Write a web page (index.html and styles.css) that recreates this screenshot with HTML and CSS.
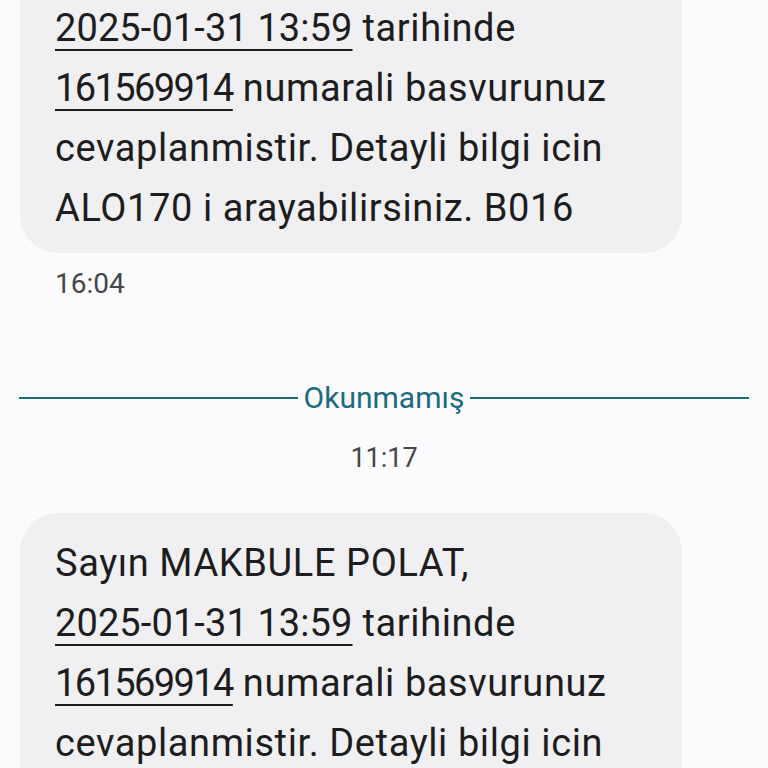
FILE: index.html
```html
<!DOCTYPE html>
<html lang="tr">

<head>
    <meta charset="UTF-8">
    <meta name="viewport" content="width=device-width, initial-scale=1.0">
    <title>Mesajlar</title>
    <link rel="stylesheet" href="styles.css">
</head>

<body>

    <main class="thread">
        <div class="message first">
            <div class="bubble">
                <p>Sayın MAKBULE POLAT,<br>
                <span class="link">2025-01-31 13:59</span> tarihinde<br>
                <span class="link number">161569914</span> numarali basvurunuz<br>
                cevaplanmistir. Detayli bilgi icin<br>
                ALO170 i arayabilirsiniz. B016</p>
            </div>
            <div class="time">16:04</div>
        </div>

        <div class="unread">
            <span class="rule"></span>
            <span class="unread-label">Okunmamış</span>
            <span class="rule"></span>
        </div>

        <div class="day-time">11:17</div>

        <div class="message">
            <div class="bubble">
                <p>Sayın MAKBULE POLAT,<br>
                <span class="link">2025-01-31 13:59</span> tarihinde<br>
                <span class="link number">161569914</span> numarali basvurunuz<br>
                cevaplanmistir. Detayli bilgi icin<br>
                ALO170 i arayabilirsiniz. B016</p>
            </div>
        </div>
    </main>

</body>

</html>
```

FILE: styles.css
```css
body {
    margin: 0;
    background-color: #fbfbfe;
    font-family: Roboto, "Noto Sans", sans-serif;
    color: #1d1d20;
    overflow: hidden;
}

.thread {
    display: flex;
    flex-direction: column;
}

.message.first {
    margin-top: -82px; /* top of the first bubble is scrolled out of view */
}

.bubble {
    width: 627px;
    margin-left: 20px;
    padding: 20px 0 15px 35px;
    background-color: #f0f0f3;
    border-radius: 38px;
}

.bubble p {
    margin: 0;
    font-size: 38px;
    line-height: 60px;
    letter-spacing: 0.6px;
}

.link {
    letter-spacing: 0.1px;
    text-decoration: underline;
    text-decoration-thickness: 2px;
    text-underline-offset: 8px;
}

.number {
    letter-spacing: -1.6px;
}

.time {
    margin: 16px 0 0 55px;
    font-size: 28px;
    line-height: 30px;
    color: #444746;
}

.unread {
    display: flex;
    align-items: center;
    gap: 6px;
    margin: 84px 19px 0 19px;
    color: #1d6a7f;
}

.rule {
    flex: 1;
    height: 2px;
    background-color: #1d6a7f;
}

.unread-label {
    font-size: 30px;
    line-height: 30px;
}

.day-time {
    margin-top: 30px;
    text-align: center;
    font-size: 27px;
    line-height: 30px;
    color: #444746;
}

.message {
    margin-top: 40px;
}
```
